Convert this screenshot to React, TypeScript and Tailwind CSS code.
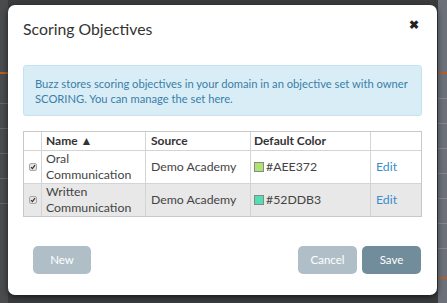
import React from "react";

const font = { fontFamily: "Lato, 'Open Sans', sans-serif" };

function Row({ name1, name2, color, hex, shaded }: { name1: string; name2: string; color: string; hex: string; shaded?: boolean }) {
  return (
    <div className={`flex h-[33px] border-t border-[#d4d4d4] ${shaded ? "bg-[#e8e8e8]" : "bg-white"}`}>
      <div className="w-[18px] border-r border-[#d4d4d4] flex items-center justify-center">
        <div className="w-[8px] h-[8px] rounded-[2px] bg-[#e4e4e4] border border-[#a8a8a8] flex items-center justify-center">
          <svg width="6" height="6" viewBox="0 0 6 6"><path d="M1 3.2 L2.4 4.6 L5 1.2" stroke="#333" strokeWidth="1.2" fill="none" /></svg>
        </div>
      </div>
      <div className="w-[104px] border-r border-[#d4d4d4] pl-[4px] flex flex-col justify-center text-[12.3px] leading-[16px] text-[#444]">
        <span>{name1}</span>
        <span>{name2}</span>
      </div>
      <div className="w-[105px] border-r border-[#d4d4d4] pl-[5px] flex items-center text-[12.3px] text-[#444]">Demo Academy</div>
      <div className="w-[120px] border-r border-[#d4d4d4] pl-[3px] flex items-center text-[12.3px] text-[#444]">
        <span className="w-[10px] h-[10px] border border-[#888] mr-[2px]" style={{ background: color }} />
        {hex}
      </div>
      <div className="flex-1 pl-[5px] flex items-center text-[12.3px] text-[#3c8dcc]">Edit</div>
    </div>
  );
}

export default function App() {
  return (
    <div className="w-[447px] h-[303px] bg-[#3b3c3e] relative overflow-hidden" style={font}>
      {/* backdrop fragments */}
      <div className="absolute left-0 top-0 w-[8px] h-full bg-[#4a4b4d]">
        <div className="h-[74px] border-b-2 border-[#b0602a]" />
        <div className="h-[30px] border-b border-[#666]" />
        <div className="h-[25px] border-b border-[#666]" />
        <div className="h-[25px] border-b border-[#666]" />
        <div className="h-[25px] border-b border-[#666]" />
        <div className="h-[25px] border-b border-[#666]" />
      </div>
      <div className="absolute right-0 top-0 w-[9px] h-full bg-[#6c7079]">
        <div className="h-[74px] border-b-2 border-[#b0602a]" />
        <div className="h-[25px] border-b border-[#888]" />
        <div className="h-[25px] border-b border-[#888]" />
        <div className="h-[25px] border-b border-[#888]" />
        <div className="h-[25px] border-b border-[#888]" />
        <div className="h-[25px] border-b border-[#888]" />
        <div className="h-[25px] border-b border-[#888]" />
        <div className="h-[25px] border-b border-[#888]" />
        <div className="h-[30px] border-b-2 border-[#b0602a]" />
      </div>
      <div className="absolute left-[8px] top-[5px] w-[429px] h-[290px] bg-white rounded-[7px] shadow-[0_2px_6px_rgba(0,0,0,0.6)] flex flex-col px-[15px]">
        <div className="flex items-center justify-between h-[45px] pt-[2px]">
          <span className="text-[15.8px] text-[#333]">Scoring Objectives</span>
          <span className="text-[11.5px] font-bold text-[#222] mr-[3px] mt-[-7px]">✖</span>
        </div>
        <div className="mt-[15px] h-[51px] bg-[#d9edf7] border border-[#c3e3f3] rounded-[3px] px-[11px] pt-[10px] text-[11.2px] leading-[15px] text-[#3a7fa8]">
          Buzz stores scoring objectives in your domain in an objective set with owner SCORING. You can manage the set here.
        </div>
        <div className="mt-[15px] border border-[#c8c8c8]">
          <div className="flex h-[18px] bg-white text-[12px] font-bold text-[#333]">
            <div className="w-[18px] border-r border-[#d4d4d4]" />
            <div className="w-[104px] border-r border-[#d4d4d4] pl-[4px] flex items-center">Name ▲</div>
            <div className="w-[105px] border-r border-[#d4d4d4] pl-[5px] flex items-center">Source</div>
            <div className="w-[120px] border-r border-[#d4d4d4] pl-[3px] flex items-center">Default Color</div>
            <div className="flex-1" />
          </div>
          <Row name1="Oral" name2="Communication" color="#AEE372" hex="#AEE372" />
          <Row name1="Written" name2="Communication" color="#52DDB3" hex="#52DDB3" shaded />
        </div>
        <div className="mt-[29px] flex items-center px-[10px] pr-[1px]">
          <button className="w-[58px] h-[28px] rounded-[5px] bg-[#b0bfc7] text-white text-[11.5px]">New</button>
          <div className="flex-1" />
          <button className="w-[59px] h-[28px] rounded-[5px] bg-[#b0bfc7] text-white text-[11.5px]">Cancel</button>
          <button className="ml-[5px] w-[59px] h-[28px] rounded-[5px] bg-[#718d9c] text-white text-[11.5px]">Save</button>
        </div>
      </div>
    </div>
  );
}
